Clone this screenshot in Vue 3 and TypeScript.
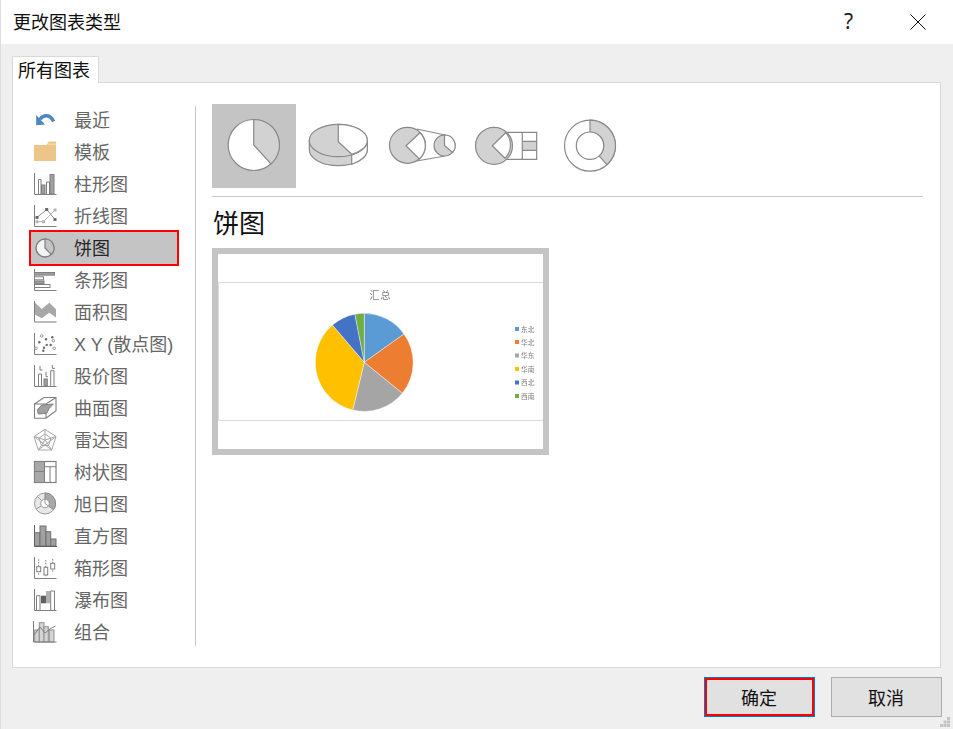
<script setup lang="ts">
interface ChartKind { name: string; svg: string; selected?: boolean }

const axis = '<path d="M1.5 1V22.5H23.5"/>'
const kinds: ChartKind[] = [
  { name: '最近', svg: '<path d="M7 11.5C10 6.5 17.5 6 20.5 13.5" stroke="#4f87c0" stroke-width="3.4"/><path d="M3.2 7L3.2 17.2L12 16.4Z" fill="#4f87c0" stroke="none"/>' },
  { name: '模板', svg: '<path d="M1 5H13.5L16 1.5H23V21H1Z" fill="#ecc688" stroke="none"/><path d="M14.5 4.2H23" stroke="#f6e2bd"/>' },
  { name: '柱形图', svg: axis + '<path d="M5.5 22V7.5H8V22" /><rect x="8.5" y="13" width="3.5" height="9" fill="#a0a0a0"/><path d="M13.5 22V10H16.5V22"/><rect x="17" y="2.5" width="4" height="19.5" fill="#a0a0a0"/>' },
  { name: '折线图', svg: axis + '<path d="M4 17.7H10.5L22 6" stroke="#b5b5b5"/><path d="M4 13.5L13.7 5.5L22 15.5" stroke="#8a8a8a"/><g fill="#6a6a6a" stroke="none"><rect x="2.5" y="12" width="3" height="3"/><rect x="12.2" y="4" width="3" height="3"/><rect x="20.5" y="14" width="3" height="3"/></g><g fill="#b5b5b5" stroke="none"><rect x="2.5" y="16.2" width="3" height="3"/><rect x="9" y="16.2" width="3" height="3"/><rect x="20.5" y="4.5" width="3" height="3"/></g>' },
  { name: '饼图', selected: true, svg: '<circle cx="12" cy="12" r="9" fill="#f4f4f4" stroke-width="1.4"/><path d="M12 3A9 9 0 0 1 18.2 18.5L12 12Z" fill="#c4c4c4" stroke-width="1.2"/>' },
  { name: '条形图', svg: axis + '<rect x="1.5" y="4.5" width="20" height="2.6" fill="#a0a0a0"/><rect x="1.5" y="8.8" width="9" height="3"/><rect x="1.5" y="13" width="9.5" height="2.4" fill="#a0a0a0"/><rect x="1.5" y="16.5" width="15.5" height="3"/>' },
  { name: '面积图', svg: '<path d="M1.3 2L8.7 9L16.3 2.7L23 9.3V17.5L16.3 12.7L8.7 18.3L1.3 14.3Z" fill="#a8a8a8" stroke="none"/><path d="M1.5 1V22H23.5"/>' },
  { name: 'X Y (散点图)', svg: axis + '<g fill="#fff" stroke="#999"><circle cx="8.7" cy="4" r="1.3"/><circle cx="20.3" cy="8.7" r="1.3"/><circle cx="3" cy="16.3" r="1.3"/><circle cx="21.3" cy="16.3" r="1.3"/></g><g fill="#6a6a6a" stroke="none"><circle cx="19.3" cy="5.3" r="1.2"/><circle cx="13" cy="7.3" r="1.2"/><circle cx="6.3" cy="10.3" r="1.2"/><circle cx="13.7" cy="13" r="1.2"/><circle cx="17.7" cy="13" r="1.2"/><circle cx="11" cy="15.7" r="1.2"/><circle cx="10.3" cy="18.7" r="1.2"/></g>' },
  { name: '股价图', svg: axis + '<path d="M5.5 22V10H8.5V22"/><rect x="11" y="15" width="3.3" height="7" fill="#a0a0a0"/><path d="M17.7 22V6.7H21V22"/><path d="M7 2V6H9.5M13 7.7V12.7H15M19.3 1V4.3H22"/>' },
  { name: '曲面图', svg: '<path d="M1.5 8L11 1.5H23V14.7L13 22.3H1.5ZM1.5 8H13L23 1.5M13 8V22.3" stroke-width="1.1"/><path d="M4.3 14L8.7 9L20.3 8L16.3 12.3L13.7 17.3L5.3 18Z" fill="#a0a0a0" stroke="#808080"/>' },
  { name: '雷达图', svg: '<g stroke="#a8a8a8"><path d="M12 1.3L23 8.5L18.7 22H5.3L1 8.5ZM12 6L18 10L15.5 17.5H8.5L6 10ZM12 1.3V12M23 8.5L12 12M18.7 22L12 12M5.3 22L12 12M1 8.5L12 12"/><path d="M1 8.5L18.7 22M23 8.5L5.3 22"/></g>' },
  { name: '树状图', svg: '<rect x="1.5" y="1.5" width="21.5" height="21" fill="#fff" stroke-width="1.2"/><rect x="1.5" y="1.5" width="10" height="10" fill="#a8a8a8"/><rect x="1.5" y="11.5" width="10" height="11" fill="#a8a8a8"/><path d="M11.5 6.7H23M17 6.7V22.5"/>' },
  { name: '旭日图', svg: '<circle cx="12" cy="11.5" r="10.5" fill="#e8e8e8" stroke="#9a9a9a"/><path d="M12 1A10.5 10.5 0 0 1 20.5 17.7L15.5 14A4.3 4.3 0 0 0 12 7.2Z" fill="#a8a8a8" stroke="#8a8a8a"/><circle cx="12" cy="11.5" r="4.3" fill="#fff" stroke="#9a9a9a"/><path d="M12 7.2V11.5L15.5 14M4.5 4.5L8.5 8.5M3 17L8 14" stroke="#9a9a9a"/>' },
  { name: '直方图', svg: '<g fill="#a0a0a0" stroke="#707070"><rect x="1.5" y="8.7" width="5.5" height="13.3"/><rect x="7" y="2" width="6" height="20"/><rect x="13" y="7.7" width="4.7" height="14.3"/><rect x="17.7" y="15" width="5.3" height="7"/></g><path d="M1.5 1V22.5H24" stroke="#606060"/>' },
  { name: '箱形图', svg: axis + '<path d="M5.7 3.3V19M12.8 4V21M19.7 3V17" stroke-dasharray="1.5 1.3"/><g fill="#fff"><rect x="3.7" y="10.7" width="4" height="5"/><rect x="11" y="11.3" width="3.7" height="7.7"/><rect x="17.7" y="7.3" width="4" height="5.7"/></g>' },
  { name: '瀑布图', svg: axis + '<path d="M3.5 22V7.7H7V22"/><rect x="8" y="7.7" width="5" height="7.6" fill="#606060" stroke="none"/><rect x="13" y="3" width="4" height="12.3" fill="#b0b0b0" stroke="none"/><path d="M17.7 22V3H21.5V22"/>' },
  { name: '组合', svg: '<g fill="#d4d4d4" stroke="#909090"><rect x="1.7" y="10" width="4.6" height="12"/><rect x="6.3" y="2.7" width="4.7" height="19.3"/><rect x="11" y="6.7" width="4.3" height="15.3"/><rect x="16.3" y="10" width="4.7" height="12"/></g><path d="M1 15L7 7L12 13L17 9L22.5 6" /><path d="M.5 1V22H23.5"/>' },
]

interface Slice { d: string; color: string }
const slices: Slice[] = [
  { color: '#5b9bd5', d: 'M364.3 362.3V313.3A49 49 0 0 1 404 334Z' },
  { color: '#ed7d31', d: 'M364.3 362.3L404 334A49 49 0 0 1 402.3 393.3Z' },
  { color: '#a5a5a5', d: 'M364.3 362.3L402.3 393.3A49 49 0 0 1 352.7 410Z' },
  { color: '#ffc000', d: 'M364.3 362.3L352.7 410A49 49 0 0 1 332.5 325.1Z' },
  { color: '#4472c4', d: 'M364.3 362.3L332.5 325.1A49 49 0 0 1 354.9 314.2Z' },
  { color: '#70ad47', d: 'M364.3 362.3L354.9 314.2A49 49 0 0 1 364.3 313.3Z' },
]
const legend = [
  { label: '东北', color: '#5b9bd5', y: 329 },
  { label: '华北', color: '#ed7d31', y: 342 },
  { label: '华东', color: '#a5a5a5', y: 355.5 },
  { label: '华南', color: '#ffc000', y: 369 },
  { label: '西北', color: '#4472c4', y: 382.5 },
  { label: '西南', color: '#70ad47', y: 396 },
]
</script>

<template>
  <div class="dialog">
    <header class="titlebar">
      <span class="title">更改图表类型</span>
      <span class="help">?</span>
      <svg class="close" width="16" height="16" viewBox="0 0 16 16">
        <path d="M.5 .5L15.5 15.5M15.5 .5L.5 15.5" />
      </svg>
    </header>

    <div class="body">
      <div class="tab">所有图表</div>
      <section class="panel">
        <nav class="side">
          <ul class="list">
            <li v-for="k in kinds" :key="k.name" class="row" :class="{ selected: k.selected }">
              <svg class="ico" width="24" height="24" viewBox="0 0 24 24" v-html="k.svg"></svg>
              <span class="label">{{ k.name }}</span>
            </li>
          </ul>
        </nav>

        <div class="main">
          <div class="thumbs">
            <div class="thumb active">
              <svg width="84" height="84" viewBox="212 104 84 84" class="shape">
                <circle cx="253.7" cy="145" r="25.5" fill="#fff" />
                <path d="M253.7 119.5A25.5 25.5 0 0 1 271 164L253.7 145Z" fill="#d2d2d2" />
              </svg>
            </div>
            <div class="thumb">
              <svg width="84" height="84" viewBox="296 104 84 84" class="shape">
                <path d="M309.3 140.5V149.5C309.3 158.5 322 165.7 338.3 165.7C354.3 165.7 367.3 158.5 367.3 149.5V140.5Z" fill="#d2d2d2" />
                <path d="M351.7 154.3V164.3C360.5 161.5 367.3 156 367.3 149.5V140.5C367.3 147 360 152 351.7 154.3Z" fill="#fff" />
                <ellipse cx="338.3" cy="140.5" rx="29" ry="16.2" fill="#d2d2d2" />
                <path d="M338.3 124.3C354.3 124.3 367.3 131.5 367.3 140.5C367.3 147 360 152 351.7 154.3L338.3 141.7Z" fill="#fff" />
              </svg>
            </div>
            <div class="thumb">
              <svg width="84" height="84" viewBox="380 104 84 84" class="shape">
                <path d="M416.7 129L445 135M416.7 161L445 156" />
                <circle cx="407.5" cy="145.3" r="18" fill="#d2d2d2" />
                <path d="M420 132.7A18 18 0 0 1 419.3 159L406 145.7Z" fill="#fff" />
                <circle cx="444.5" cy="145.5" r="10.5" fill="#d2d2d2" />
                <path d="M444.5 135A10.5 10.5 0 0 1 452.5 152.5L444.5 145.5Z" fill="#fff" />
              </svg>
            </div>
            <div class="thumb">
              <svg width="84" height="84" viewBox="464 104 84 84" class="shape">
                <rect x="522.3" y="141.3" width="14.4" height="9" fill="#d2d2d2" stroke="none" />
                <path d="M503 132.3H536.7V159.3H503M522.3 132.3V159.3M522.3 141.3H536.7M522.3 150.3H536.7" />
                <circle cx="494" cy="145.8" r="18.5" fill="#d2d2d2" />
                <path d="M505.7 132.7A18.5 18.5 0 0 1 505 158.3L492.3 145.7Z" fill="#fff" />
              </svg>
            </div>
            <div class="thumb">
              <svg width="84" height="84" viewBox="548 104 84 84" class="shape">
                <circle cx="590" cy="145.7" r="25.5" fill="#fff" />
                <path d="M590 120.2A25.5 25.5 0 0 1 607 164.7L599.1 155.9A13.7 13.7 0 0 0 590 132Z" fill="#d2d2d2" />
                <circle cx="590" cy="145.7" r="13.7" fill="#fff" />
              </svg>
            </div>
          </div>
          <div class="divider"></div>
          <h2 class="heading">饼图</h2>
          <div class="preview">
            <svg class="chart" width="325" height="195" viewBox="218 254 325 195">
              <path d="M218.5 282.5H543M218.5 420.5H543M218.5 282.5V420.5" stroke="#dcdcdc" fill="none" />
              <text x="380.5" y="299" text-anchor="middle" class="chart-title">汇总</text>
              <path v-for="s in slices" :key="s.color" :d="s.d" :fill="s.color" stroke="#fff" stroke-width=".4" />
              <g v-for="l in legend" :key="l.label">
                <rect x="515" :y="l.y - 2" width="4" height="4" :fill="l.color" />
                <text x="521" :y="l.y + 2.5" class="chart-legend">{{ l.label }}</text>
              </g>
            </svg>
          </div>
        </div>
      </section>

      <footer class="actions">
        <button class="btn primary" type="button">确定</button>
        <button class="btn" type="button">取消</button>
      </footer>
    </div>

    <svg class="grip" width="10" height="10" viewBox="0 0 10 10">
      <path d="M7 0h3v3H7zM3.5 3.5h3v3h-3zM7 3.5h3v3H7zM0 7h3v3H0zM3.5 7h3v3h-3zM7 7h3v3H7z" />
    </svg>
  </div>
</template>

<style>
html, body { margin: 0; background: #fff; }
</style>

<style scoped>
.dialog {
  position: relative;
  box-sizing: border-box;
  width: 953px;
  height: 729px;
  display: flex;
  flex-direction: column;
  border-left: 1px solid #dcdcdc;
  background: #fff;
  color: #111;
  font-family: "Noto Sans CJK SC", "Noto Sans", sans-serif;
  font-size: 18px;
  overflow: hidden;
}
.titlebar {
  flex: none;
  height: 44px;
  display: flex;
  align-items: center;
  padding-left: 12px;
  background: #fff;
}
.title { flex: 1; line-height: 42px; padding-bottom: 2px; }
.help {
  font-family: "Noto Sans", sans-serif;
  font-size: 21px;
  line-height: 42px;
  padding-bottom: 2px;
  color: #222;
  margin-right: 57px;
}
.close { margin-right: 27px; }
.close path { stroke: #111; stroke-width: 1; fill: none; }

.body {
  flex: 1;
  min-height: 0;
  background: #efefef;
  padding: 12px 11px 0;
  display: flex;
  flex-direction: column;
}
.tab {
  align-self: flex-start;
  box-sizing: border-box;
  width: 87px;
  height: 27px;
  padding-left: 5px;
  line-height: 25px;
  background: #fff;
  border: 1px solid #d9d9d9;
  border-bottom: none;
  position: relative;
  z-index: 1;
}
.panel {
  box-sizing: border-box;
  flex: none;
  width: 929px;
  height: 586px;
  margin-top: -1px;
  background: #fff;
  border: 1px solid #d9d9d9;
  display: flex;
}
.side {
  flex: none;
  box-sizing: border-box;
  width: 183px;
  height: 540px;
  margin-top: 23px;
  padding-left: 18px;
  border-right: 1px solid #c8c8c8;
}
.list {
  list-style: none;
  margin: -2px 0 0;
  padding: 0;
  width: 146px;
}
.row {
  height: 32px;
  display: flex;
  align-items: center;
  gap: 17px;
  padding-left: 2px;
  color: #666;
  white-space: nowrap;
}
.row.selected {
  background: #c4c4c4;
  color: #262626;
  outline: 2px solid #f00;
}
.ico {
  flex: none;
  fill: none;
  stroke: #7f7f7f;
  stroke-width: 1;
}
.label {
  font-family: "Liberation Sans", "Noto Sans CJK SC", sans-serif;
  line-height: 30px;
  padding-top: 2px;
}

.main {
  flex: 1;
  min-width: 0;
  padding: 21px 17px 0 16px;
}
.thumbs { display: flex; height: 84px; }
.thumb { width: 84px; height: 84px; }
.thumb.active { background: #c4c4c4; }
.shape {
  display: block;
  fill: none;
  stroke: #8a8a8a;
  stroke-width: 1.2;
}
.divider { height: 1px; margin-top: 8px; background: #c8c8c8; }
.heading {
  margin: 0 0 0 1px;
  padding: 10px 0 11px;
  font-size: 26px;
  font-weight: 400;
  line-height: 30px;
  color: #111;
}
.preview {
  box-sizing: border-box;
  width: 337px;
  height: 207px;
  border: 6px solid #c4c4c4;
  background: #fff;
}
.chart { display: block; filter: blur(.4px); }
.chart-title { font-size: 10px; letter-spacing: 1px; fill: #7f7f7f; }
.chart-legend { font-size: 6.7px; fill: #7f7f7f; }

.actions {
  flex: none;
  display: flex;
  justify-content: flex-end;
  gap: 16px;
  padding: 9px 0 0;
  width: 930px;
}
.btn {
  box-sizing: border-box;
  width: 111px;
  height: 40px;
  font: inherit;
  line-height: 36px;
  color: #111;
  background: #e1e1e1;
  border: 1px solid #adadad;
  padding: 0 1px 1px 0;
}
.btn.primary {
  border: 1px solid #0078d7;
  box-shadow: inset 0 0 0 2px #f00;
  outline: none;
}
.grip {
  position: absolute;
  right: 3px;
  bottom: 2px;
  fill: #c4c4c4;
}
</style>
